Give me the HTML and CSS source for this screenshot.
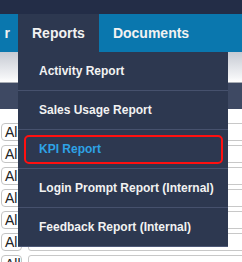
FILE: index.html
```html
<!DOCTYPE html>
<html>
<head>
<meta charset="utf-8">
<link rel="stylesheet" href="styles.css">
</head>
<body>
<div class="topstrip"></div>
<nav class="nav">
  <div class="nav-item nav-first">r</div>
  <div class="nav-item nav-active">Reports
    <ul class="dropdown">
      <li class="dd-item">Activity Report</li>
      <li class="dd-item">Sales Usage Report</li>
      <li class="dd-item dd-kpi">KPI Report<span class="highlight"></span></li>
      <li class="dd-item">Login Prompt Report (Internal)</li>
      <li class="dd-item">Feedback Report (Internal)</li>
    </ul>
  </div>
  <div class="nav-item">Documents</div>
</nav>
<div class="subhead"></div>
<div class="subline"></div>
<div class="band"></div>
<div class="rows">
  <div class="row"><div class="sel">All</div><div class="inp"></div></div>
  <div class="row"><div class="sel">All</div><div class="inp"></div></div>
  <div class="row"><div class="sel">All</div><div class="inp"></div></div>
  <div class="row"><div class="sel">All</div><div class="inp"></div></div>
  <div class="row"><div class="sel">All</div><div class="inp"></div></div>
  <div class="row"><div class="sel">All</div><div class="inp"></div></div>
  <div class="row"><div class="sel">All</div><div class="inp"></div></div>
</div>
</body>
</html>
```

FILE: styles.css
```css
html, body {
  margin: 0;
  padding: 0;
  background: #ffffff;
  overflow: hidden;
  font-family: "Liberation Sans", Arial, sans-serif;
}
.topstrip {
  height: 14px;
  background: #232d47;
}
.nav {
  display: flex;
  height: 38px;
  background: #0a77ae;
  position: relative;
  z-index: 5;
}
.nav-item {
  position: relative;
  padding: 0 14px;
  line-height: 38px;
  font-size: 14px;
  font-weight: bold;
  color: #f2f2f2;
  white-space: nowrap;
}
.nav-first {
  flex: 0 0 18px;
  box-sizing: border-box;
  padding: 0 8px 0 0;
  text-align: right;
  overflow: hidden;
}
.nav-active {
  background: #2d3850;
}
.dropdown {
  position: absolute;
  left: 0;
  top: 38px;
  width: 210px;
  margin: 0;
  padding: 0;
  list-style: none;
  background: #2d3850;
  border-bottom: 1px solid #4d5876;
}
.dd-item {
  position: relative;
  height: 38px;
  line-height: 38px;
  padding-left: 21px;
  font-size: 12px;
  font-weight: bold;
  color: #f2f2f2;
  border-bottom: 1px solid #46516d;
}
.dd-item:last-child {
  border-bottom: none;
}
.dd-kpi {
  color: #2ea3e6;
}
.highlight {
  position: absolute;
  left: 6px;
  right: 5px;
  top: 5px;
  bottom: 4px;
  border: 2px solid #ff1010;
  border-radius: 5px;
}
.subhead {
  height: 30px;
  background: linear-gradient(#c6cad3, #f4f5f7 85%, #ffffff);
}
.subline {
  height: 1px;
  background: #a9adb5;
}
.band {
  height: 26px;
  background: #3e4963;
}
.rows {
  display: flex;
  flex-direction: column;
  gap: 4px;
  padding: 14px 0 0 1px;
}
.row {
  display: flex;
  gap: 6px;
  height: 18px;
}
.sel {
  width: 34px;
  box-sizing: border-box;
  border: 1px solid #c4c4c4;
  border-radius: 4px;
  padding-left: 3px;
  font-size: 14px;
  line-height: 16px;
  color: #222;
}
.inp {
  flex: 0 0 400px;
  box-sizing: border-box;
  border: 1px solid #c8c8c8;
  border-radius: 3px;
}
```
